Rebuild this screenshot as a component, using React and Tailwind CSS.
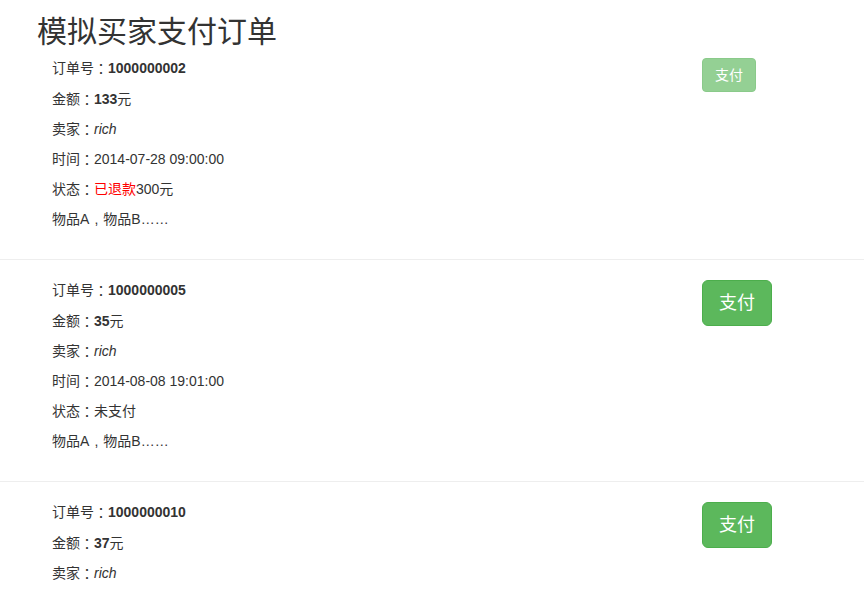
const orders = [
  {
    id: '1000000002',
    amount: '133',
    seller: 'rich',
    time: '2014-07-28 09:00:00',
    status: 'refunded',
    refund: '300',
    paid: true,
  },
  {
    id: '1000000005',
    amount: '35',
    seller: 'rich',
    time: '2014-08-08 19:01:00',
    status: 'unpaid',
    paid: false,
  },
  {
    id: '1000000010',
    amount: '37',
    seller: 'rich',
    time: '2014-08-10 12:30:00',
    status: 'unpaid',
    paid: false,
  },
];

const font = "font-['Liberation_Sans','Noto_Sans_CJK_SC',sans-serif]";

// centered full-width punctuation, as in the screenshot
const P = ({ children }) => (
  <span className="font-['Noto_Sans_CJK_TC',sans-serif] leading-none">{children}</span>
);

const Comma = () => <span className="inline-block w-[14px] text-center">,</span>;

const Row = ({ children, className = '' }) => (
  <div className={`h-[30px] flex items-center whitespace-pre ${className}`}>{children}</div>
);

const OrderItem = ({ order, first }) => {
  return (
    <div
      className={`flex pl-[52px] pb-[25px] ${
        first ? 'pt-[5px]' : 'pt-[15px] border-t border-[#eeeeee]'
      }`}
    >
      <div className="w-[650px] text-[14px] leading-[20px] text-[#333333]">
        <Row className="mb-[1px]">
          订单号<P>：</P>
          <b>{order.id}</b>
        </Row>
        <Row>
          金额<P>：</P>
          <b>{order.amount}</b>元
        </Row>
        <Row>
          卖家<P>：</P>
          <i>{order.seller}</i>
        </Row>
        <Row>
          时间<P>：</P>
          {order.time}
        </Row>
        <Row>
          状态<P>：</P>
          {order.status === 'refunded' ? (
            <>
              <span className="text-[#ff0000]">已退款</span>
              {order.refund}元
            </>
          ) : (
            '未支付'
          )}
        </Row>
        <Row>
          物品A<Comma />物品B……
        </Row>
      </div>
      <div className="pt-[5px]">
        {order.paid ? (
          <button
            disabled
            className="h-[34px] px-[12px] text-[14px] leading-[20px] text-white bg-[#5cb85c] border border-[#4cae4c] rounded-[4px] opacity-65"
          >
            支付
          </button>
        ) : (
          <button className="h-[46px] px-[16px] text-[18px] leading-[24px] text-white bg-[#5cb85c] border border-[#4cae4c] rounded-[6px]">
            支付
          </button>
        )}
      </div>
    </div>
  );
};

const App = () => {
  return (
    <div className={`min-h-screen bg-white ${font}`}>
      <h2 className="pl-[37px] pt-[15px] text-[30px] leading-[33px] font-normal text-[#333333]">
        模拟买家支付订单
      </h2>
      <div>
        {orders.map((order, i) => (
          <OrderItem key={order.id} order={order} first={i === 0} />
        ))}
      </div>
    </div>
  );
};

export default App;
